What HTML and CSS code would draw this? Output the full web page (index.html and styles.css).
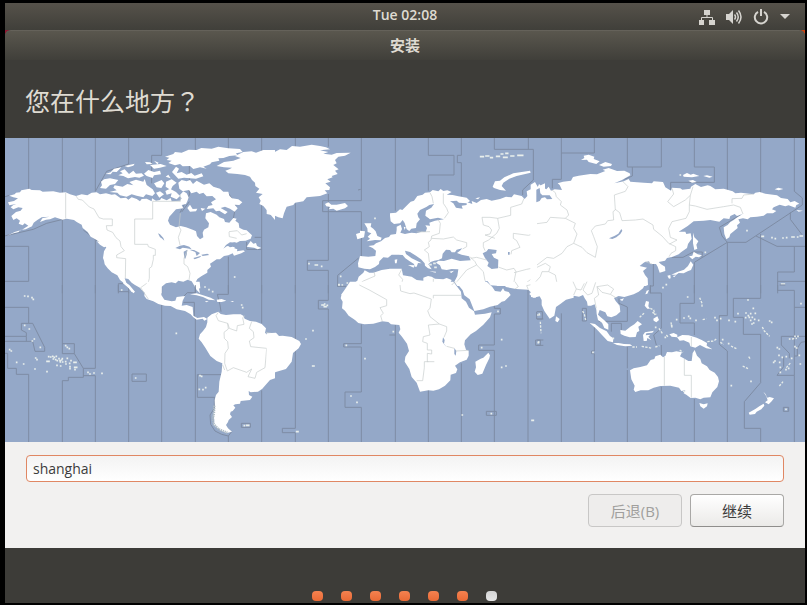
FILE: index.html
```html
<!DOCTYPE html>
<html lang="zh-CN">
<head>
    <meta charset="UTF-8">
    <meta name="viewport" content="width=device-width, initial-scale=1.0">
    <title>安装</title>
    <link rel="stylesheet" href="styles.css">
</head>
<body>
    <header class="panel">
        <time class="clock">Tue 02:08</time>
        <div class="indicators">
            <svg width="16" height="16" viewBox="0 0 16 16"><path d="M5 1h6v5H5zM0 11h5v5H0zM10 11h6v5h-6z"/><path class="thin" d="M8 6v2.500M2.500 11V8.500h11V11"/></svg>
            <svg width="16" height="16" viewBox="0 0 16 16"><path d="M0 5h3l4-4v14l-4-4H0z"/><path class="arc" d="M8.500 5.500q2 2.500 0 5M10.500 3.500q3.500 4.500 0 9M12.500 1.500q5 6.500 0 13"/></svg>
            <svg width="16" height="16" viewBox="0 0 16 16"><path class="ring" d="M5 2.800a6.200 6.200 0 1 0 6 0M8 0v7"/></svg>
            <svg class="caret" width="10" height="5" viewBox="0 0 10 5"><path d="M0 0h10L5 5z"/></svg>
        </div>
    </header>

    <div class="desktop">
        <main class="window">
            <div class="titlebar">安装</div>
            <h1>您在什么地方？</h1>

            <svg class="map" viewBox="0 0 2400 912" role="img" aria-label="世界时区地图">
                <!-- North America -->
                <g transform="translate(-15 -24)">
                    <path class="zone" d="M86 24V180M187 24V190M286 24V184M386 24V102L320 124L286 184M485 24V76H455V160M568 60V195M586 24V60M685 24V60M785 24V66M0 205L28 196M0 321L100 298L140 280L197 266M15 349H86V454H15M187 266V490M286 325V490M250 300L286 328L312 350M355 490V461H378M386 470V490M485 470V490M586 465V490M685 380V490M785 220V490M700 266L708 222L685 190M545 246L568 215M740 336V358H785M764 322H785M568 195L540 248"/>
                    <path class="land" d="M28 197L44 193L48 188L60 187L64 181L88 176L95 180L120 181L128 185L160 184L180 188L197 187L210 193L228 198L245 193L262 196L275 188L290 187L300 193L318 190L335 194L345 193L362 205L378 203L385 209L395 202L410 207L420 214L425 207L440 206L455 214L456 205L468 212L480 210L484 204L500 211L512 204L515 214L540 212L545 205L538 197L550 184L560 190L566 202L562 214L558 222L545 225L550 235L528 238L518 249L508 260L504 272L510 284L528 292L542 288L558 292L580 300L588 304L591 318L600 328L610 322L608 308L612 299L625 292L627 280L616 265L618 250L632 246L650 254L658 262L672 267L675 276L688 278L700 264L710 266L706 272L716 280L718 293L730 299L740 301L756 316L752 326L737 332L720 333L710 338L690 337L678 345L670 356L680 349L697 346L707 347L703 355L712 358L711 364L730 361L735 364L724 370L702 377L698 370L685 376L672 378L660 388L650 388L638 396L630 401L633 410L622 420L622 428L605 438L592 447L587 457L596 472L600 490L590 480L580 462L575 454L563 449L550 455L535 452L527 460L515 457L498 460L485 470V490H436L430 479L405 465L395 458L385 447L374 445L379 458L390 470L402 485L395 486L380 466L360 450L352 436L335 427L323 415L314 403L312 392L309 384L312 364L319 352L308 344L290 330L272 320L263 306L248 294L245 284L230 276L222 270L200 266L188 269L165 262L150 268L138 269L120 276L127 265L148 260L125 262L112 270L101 278L96 289L77 298L60 300L56 306L40 310L20 318L44 306L66 299L85 287L74 280L68 286L56 281L60 272L50 265L40 270L34 258L48 246L62 242L68 234L55 232L40 238L32 232L40 225L48 222L28 226L24 217L42 213L54 205L40 202Z"/>
                    <!-- arctic islands -->
                    <path class="land" d="M495 80L520 72L525 66L545 68L566 59L590 60L604 54L635 56L655 50L685 55L720 57L728 66L708 70L712 76L688 78L670 84L655 85L658 92L635 97L630 103L610 110L620 116L600 112L580 117L570 108L548 109L540 102L525 106L505 99L515 92L500 90L508 83ZM516 126L528 110L537 116L530 130L545 126L560 134L574 129L584 137L605 130L610 139L588 146L552 143L535 146ZM535 158L545 150L560 154L570 150L579 162L590 152L612 164L628 160L640 170L660 176L670 185L685 185L688 197L696 205L715 208L727 217L718 225L704 224L713 235L704 245L690 236L675 230L662 234L683 246L675 253L658 242L648 244L640 235L620 237L625 228L638 225L633 217L648 208L637 198L620 199L610 188L598 192L590 185L574 190L567 180L548 184L538 176ZM344 166L368 170L382 162L400 166L388 156L408 149L430 155L434 147L440 165L458 178L465 190L457 198L438 193L430 202L410 197L395 193L380 200L360 196L352 188L328 186L350 181L340 173ZM303 155L312 148L330 145L355 150L345 162L330 165L318 176L300 174L306 166ZM316 132L332 127L342 116L364 112L350 126L338 125L332 133ZM355 136L368 130L360 124L374 118L387 132L400 122L408 131L425 130L432 137L418 143L405 141L384 145L370 138ZM374 108L404 101L400 107L384 112ZM435 96L450 97L458 102L440 103ZM462 92L476 98L472 103ZM450 105L482 102L500 108L480 113L462 116ZM432 131L445 120L462 126L480 122L483 133L462 136L458 144L440 138ZM498 155L515 148L530 158L518 168L512 180L497 170ZM462 160L485 150L493 160L484 174L470 172ZM468 188L480 184L492 193L478 203ZM496 183L510 176L528 186L540 198L530 208L512 200L515 190L500 194ZM497 140L505 134L512 145ZM562 234L570 224L578 237L592 236L588 244L570 245ZM602 234L616 236L606 243Z"/>
                    <path class="land" d="M650 108L672 96L700 92L722 84L705 78L730 66L755 64L768 68L790 60H825V270L810 252L800 240L790 228L778 222L782 212L776 202L788 192L768 188L778 176L766 168L765 158L756 150L750 140L735 135L712 132L685 130L676 122L688 118L696 113L672 112ZM740 350L752 333L760 341L768 339L771 348L784 354L773 358L762 353ZM290 334L303 336L318 350L312 352L300 344Z"/>
                    <path class="sea" d="M474 310L480 313L490 324L493 332L484 324L480 322ZM526 354L540 347L552 345L568 350L575 358L560 355L548 353L540 358ZM553 385L551 365L562 359L560 374L556 386ZM568 359L582 360L600 369L590 378L586 366ZM580 384L604 377L600 382L584 388ZM604 374L622 371L628 375L608 378ZM680 345L703 337L722 343L712 354L698 350L690 352ZM592 214L600 208L614 222L600 234Z"/>
                    <path class="border" d="M197 188V266M228 198L235 208L247 210L268 231L282 237L297 263L310 267H337V287H319L321 300L338 307L348 323L360 333L363 350L373 362L350 375V383L377 386L376 445M541 195V214H458V267H404V343H443L445 350L466 358V376H460V388L455 410L448 415V445L440 475M541 250L537 290L543 300L535 322L540 345M562 360L552 385V402L563 410L570 430L567 450M687 305L712 302L725 315L740 311M687 306L688 320L710 325"/>
                    <path class="speck" d="M704 441h0"/>
                </g>

                <!-- Europe and western Asia -->
                <g transform="translate(795 -24)">
                    <path class="zone" d="M76 24V50M175 24V50M76 220V490M274 24V212H158V245H274V378M376 24V242M475 24V76H552V135H475V182M574 24V76H562V98H574V200M673 24V58H790V150L758 180V195M775 24V58M175 192V391H112V421H175V490M266 384L203 436V470M264 180L272 178M172 120L185 110L196 96M475 240V265"/>
                    <path class="land" d="M-10 60L10 68L30 58L50 60L66 48L90 50L125 44L150 48L168 52L180 58L150 61L175 66L160 71L185 74L200 69L242 68L225 77L205 80L195 90L200 100L190 105L206 118L195 122L203 132L185 138L188 142L172 148L182 155L166 160L180 172L178 180L164 181L172 190L150 198L110 202L100 214L75 218L70 225L50 230L45 242L42 250L38 265L25 262L15 257L-10 252ZM165 222L175 217L184 224L200 224L225 219L234 228L225 235L200 242L190 236L176 238L181 231L169 229ZM668 170L675 154L690 152L703 142L730 130L780 122L782 128L740 138L718 146L700 158L695 168L708 182L690 180L672 174Z"/>
                    <path class="land" d="M360 258V250L378 248L390 238L397 240L415 222L422 215L432 212L442 198L458 194L465 188L480 187L488 180L505 184L512 177L520 183L532 181L545 186L530 194L548 195L565 199L590 203L600 213L590 220L567 218L560 212L540 214L550 220L558 233L578 236L575 227L590 225L590 216L607 222L605 213L620 219L633 210L650 207L665 212L690 207L708 200L725 202L732 193L755 198L764 207L772 198L770 184L782 178L782 164L795 156L803 170L825 160V468H562L553 455L562 438L565 418L545 417L530 420L515 418L510 406L498 398L505 392L522 393L545 386L570 393L602 391L597 379L575 374L561 369L570 362L577 355L560 359L555 367L545 367L540 360L528 359L518 371L516 385L505 390L493 392L482 396L475 403L485 418L474 415L465 407L464 400L453 388L438 377L420 366L405 362L408 372L425 385L442 393L455 400L444 399L440 410L434 410L432 402L418 393L406 385L398 375L385 374L365 374L354 383L340 382L328 394L327 402L315 411L300 418L283 416L265 412L264 400L270 378L295 380L316 378L318 362L308 354L295 348L311 346L318 340L333 334L345 324L357 321L362 314L378 312L380 300V290L392 284L396 297L391 308L405 312L415 310L425 308L440 310L455 305L467 306L471 294L466 286L480 287L478 278L495 272L522 268L504 263L480 268L466 257L468 242L484 233L492 222L478 225L469 231L450 240L442 251L445 262L450 268L440 280L438 294L424 296L418 303L410 298L404 279L398 270L390 280L372 282L362 274Z"/>
                    <path class="land" d="M213 495L240 470L248 462L262 452L266 440L280 428L284 421L298 428L310 428L335 420L360 416L395 416L399 436L412 438L425 440L440 450L460 452V443L474 438L485 440L495 446L520 448L530 444L545 450L540 460L568 495ZM283 280L304 280L302 290L310 296L317 304L322 318L335 323L332 331L315 330L290 334L300 326L293 320L304 310L293 306L292 295ZM258 312L270 308V302L285 304L282 322L262 328ZM414 405L433 406L431 413ZM374 389L382 388L380 400L375 400ZM478 424L498 425L497 428ZM538 425L552 422L544 429ZM401 290L407 292L404 300ZM616 205L630 202L624 208Z"/>
                    <path class="sea" d="M638 370L650 364L655 357L680 360L678 370L665 372L672 383L685 389L684 415L665 417L652 408L656 398L645 384ZM645 452L653 454L662 466L680 467L690 472L700 469L709 470L703 480L672 482L660 474L650 468ZM714 366h5v8h-5z"/>
                    <path class="border" d="M480 188L486 200L490 220M520 190V220L530 235L535 248L523 265M504 268L511 280L508 310L485 318L483 330L475 337L478 350L463 360L475 370L478 396M440 306L480 305M485 325L520 327L550 321L560 330L590 338V350L578 357M762 205L755 222L722 232V256L683 265L688 295L680 310L656 330L640 338V350L645 362M683 265L660 262L636 262L640 285L657 290L665 300L660 312L645 315L675 325M830 300L797 310L775 316L730 310L730 325L740 332L750 352L725 362L723 373M602 385L620 382L650 390M600 380L615 395L620 405L590 420L565 450L555 462M620 405L640 425L645 452M685 411L710 420L732 415L738 425L732 455L742 475M732 428L770 418L800 412M820 384L790 388L810 400M312 425L315 438L280 453L268 462L270 482M395 418L386 435L398 448L390 485M490 446V470M745 475L780 450L800 430M820 450L790 472"/>
                    <path class="speck" d="M117 401h0M136 405h6M155 409h0M212 439h0M207 464h0M217 465h0M232 459h0M315 265h0M632 80h8M648 78h8M662 83h5M680 79h8M694 72h4M708 70h5M701 82h10M723 78h8M744 76h14M480 404h3M492 400h3M495 412h3"/>
                </g>

                <!-- Northern Asia -->
                <g transform="translate(1596 -24)">
                    <path class="zone" d="M73 24V148H46V175M172 24V69H73M271 24V111H373V24M286 111V138L262 148M472 24V111H532V157H401V180M571 24V180M671 24V190M772 24V184L796 204V225L627 337H571L555 318L547 292L612 254M760 247V268L795 314M657 318L720 349H804M571 337L472 397V490M495 383L496 366H468L438 382H405M571 337V490M671 312V490M772 349V426H722V490M722 454H804M349 400V468H340V490"/>
                    <path class="land" d="M-20 185L0 178L6 162L16 172L28 178L35 170L42 182L53 178L75 180L68 165L62 160L78 155L102 152L108 141L125 137L160 132L180 133L205 123L197 119L215 114L240 123L262 122L278 130L280 136L255 150L232 160L260 154L275 147L280 155L320 158L345 160L350 154L378 156L385 172L402 182L405 173L430 175L436 179L460 176L462 170L475 162L492 171L512 166L520 168L535 178L560 176L587 184L595 190L612 188L650 193L655 188L668 186L685 191L720 196L732 204L752 207L760 217L773 213L787 221L778 225L775 233L755 226L745 229L728 224L710 232L705 238L718 243L708 250L690 250L680 257L660 260L640 262L632 268L618 265L604 268L609 278L600 286L602 294L592 302L580 312L577 322L568 328L562 312L560 292L572 285L580 276L590 270L599 263L617 252L600 258L593 252L580 258L577 267L560 265L547 275L520 270L500 272L470 274L452 288L425 305L445 305L448 312L461 310L464 326L453 342L450 354L432 367L425 373L407 380L390 384L384 392L365 396L372 403L384 410L385 423L368 428L362 410L357 402L340 402L336 394L322 397L308 408L330 413L318 423L324 435L332 445L333 465L326 468H-20Z"/>
                    <path class="land" d="M468 308L472 322L484 334L478 344L481 356L472 360L468 340ZM456 379L466 377L470 365L482 373L495 376L486 382L476 380L466 388ZM461 394L469 404L462 420L452 424L440 430L425 429L418 434L403 434L421 426L441 419L453 408ZM391 437L400 435L401 445L396 446ZM408 438L418 436L411 442ZM132 90L142 84L140 77L155 74L172 80L170 87L188 94L178 102L155 96L150 89ZM186 105L205 96L225 102L222 108L200 110ZM438 135L450 129L461 134L469 131L487 138L465 142L440 140ZM499 138L510 136L527 140L517 143ZM454 152L468 150L479 156L465 158ZM713 178L724 173L739 177L725 181ZM778 240L798 242L785 245Z"/>
                    <path class="sea" d="M216 325L232 318L244 311L253 297L256 302L250 312L238 322L226 327ZM-2 179L8 174L10 190L16 196L38 196L46 207L30 208L24 202L14 204L8 213L-2 217Z"/>
                    <path class="border" d="M45 180L55 188L58 200L73 215L70 225L90 240L95 255L85 265L40 262L30 277L0 281M85 265L115 280L110 295L120 312L110 340M110 340L90 350L75 370L50 385L30 382L0 405M110 340L135 352L150 368L175 382L181 350L170 320L163 302L175 288L205 282L212 272L230 270L228 245L235 240L232 195L265 184L273 170L255 152M235 238L248 248L255 272L295 270L318 267L348 285L350 298L375 318L395 340L416 350V362L402 370L396 380M405 175L410 192L392 215L410 230L445 210L460 196L468 170M460 196L457 225L475 228L510 238L560 230L590 225L610 232L618 252M457 225V245L447 265L405 275L395 295L400 322L420 330L398 342M650 192L620 195L615 205L585 206V220M0 412L25 400L40 410L35 425L15 425L10 440L-10 462M35 425L55 435L60 460L90 466L118 464L125 480M118 464L145 475L152 458L175 462L182 478M345 402L325 395"/>
                    <path class="speck" d="M675 319h4M705 323h0M715 326h0M738 324h0M749 323h0M765 321h6M782 321h0M790 318h6M734 462h8M388 464h0M378 473h0M505 367h0M630 302h0M430 135h0"/>
                </g>

                <!-- Pacific and South America -->
                <g transform="translate(-15 441)">
                    <path class="zone" d="M15 67H86V115H98L134 187V199H105L98 169H15M64 115H86M64 115V135L79 143V154H15M79 154V169M15 205H23V250H49V268H86V471M187 0V206H223V176H187M223 206L250 250V277H205V287H187V471M286 0V250H250M250 272H286V471M355 0V20H386V471M396 267H439V289H396ZM485 60V471M586 0V23H562L535 50M550 52H583V100M586 100V471M685 0V28H652L660 60L663 80M665 269H592V337H645M643 340V370L630 390L632 418L645 438L665 448L685 453V471M685 453L695 440M785 0V115M785 316V471M724 415H751V427H724Z"/>
                    <path class="land" d="M420 -10H485L484 30L493 44L515 49L526 47L530 36L555 33L548 47L545 62L560 60L578 66L580 92L592 99L612 96L622 102L613 107L608 101L590 104L580 97L572 88L555 78L530 73L512 63L495 62L475 57L460 49L440 42L433 33L434 23L422 12ZM373 -10L388 0L405 20L400 25L385 8L368 -6ZM584 -10H599L601 10L594 11L587 1ZM570 28L590 25L609 31L632 38L646 46L626 44L609 36L590 31ZM650 44L665 42L679 47L665 51L652 51ZM614 48L626 49L620 52ZM691 48L702 48L698 51Z"/>
                    <path class="land" d="M622 98L635 88L655 80L662 87L678 90L700 88L722 88L730 92L734 101L750 108L768 110L785 117L798 130L795 143L802 150L825 145V280L810 285L800 296L787 311L774 320L752 322L746 318L747 330L757 335L750 345L722 348L720 356L706 358L700 361L706 368L698 378L692 380L690 388L696 396L686 405L684 411L678 420L684 430L696 440L680 444L663 437L650 427L640 420L643 405L640 388L645 370L644 345L648 330L656 320L658 290L665 260L667 235L650 228L631 213L616 188L605 172L596 161L600 148L609 138L618 126L622 112Z"/>
                    <path class="fjord" d="M643 362L642 385L638 402L642 418L655 432L682 443"/>
                    <path class="border" d="M445 42L430 20L422 8L440 -5M655 82L648 92L655 107L683 115L688 130L710 138L712 122L732 118L728 98L735 92M683 115L685 132L672 142L673 160L683 170L685 190L675 205L674 235L682 258L700 248L740 262L755 252L744 275L765 280L770 262L795 248L800 190L752 185L748 168L762 158L760 140L748 130L755 110M798 142L815 145M668 240L674 255"/>
                    <path class="speck" d="M74 33h0M84 34h0M96 38h0M100 43h0M365 15h0M74 121h0M88 132h0M103 162h0M97 168h0M121 187h0M29 194h0M34 198h0M197 182h0M202 187h0M208 191h0M50 232h0M71 237h0M107 219h0M111 224h0M105 252h0M141 229h6M141 260h0M146 215h0M152 216h0M158 214h0M163 217h0M169 214h0M160 222h0M167 224h0M172 227h0M177 221h0M180 227h0M185 225h0M187 221h0M181 231h0M188 231h0M171 241h0M182 243h0M197 230h0M202 220h0M198 237h0M209 235h0M213 227h0M222 232h6M210 245h0M210 251h0M224 247h6M225 254h0M264 262h0M270 267h0M282 264h0M306 265h0M407 279h0M529 145h0M600 272h0M605 274h0M598 313h0M609 314h0M617 308h0M733 422h0M740 421h6M615 6h0M627 14h0M638 20h0M725 60h0M728 68h0"/>
                </g>

                <!-- Africa and the Atlantic -->
                <g transform="translate(795 441)">
                    <path class="zone" d="M76 0V430H37V443H76V471M175 0V46H145V72H175V471M203 0V4H228M274 118V176H221V186H274V321H225V367H274V471M376 120V150H358M376 150V471M475 315V471M574 235V471M673 60V70H691V87H673V180H626V196H673V471M649 379H679V391H649ZM774 15V471M800 80V102H820M820 165H797V181H820"/>
                    <path class="land" d="M240 -10L225 13L215 27L212 40L218 50L216 70L225 77L236 92L255 105L265 114L283 118L310 116L337 109L355 111L363 118L388 120L391 133L386 143L396 155L411 176L417 198L406 215L404 230L418 252L425 276L440 293L447 312L450 320L475 316L490 317L507 313L525 302L541 286L542 269L558 264L562 253L555 242L570 232L590 224L596 212V197L588 194L583 178L585 166L602 148L618 138L640 119L660 97L665 82L645 86L615 89L612 79L597 68L588 50L575 40L573 20L550 -10Z"/>
                    <path class="land" d="M557 -10L578 16L583 31L599 43L613 78L640 73L660 65L683 60L695 50L704 48L722 30L716 21L704 18L699 10L692 20L675 18L667 6L650 -10ZM693 -10L708 6L738 12L775 14L783 22L778 27L790 38L825 30V-10ZM616 230L632 221L640 218L655 203L660 211L658 220L648 240L637 266L623 270L614 260L618 247ZM-10 145L18 143L27 153L38 152L65 156L88 168L93 177L86 190L69 204L65 230L55 243L48 252L20 260L0 268L-10 285Z"/>
                    <path class="sea" d="M519 157L524 165L522 176L530 186L524 180L517 170ZM553 189L559 198L557 212L553 207Z"/>
                    <path class="border" d="M268 0L298 15L350 44V62L330 68L340 85L332 92L337 110M390 0L392 18L420 26L432 24L484 42L480 70L473 77L480 95L508 117M545 0L555 -10M490 40V31H573M508 117L475 120L480 150L460 155L458 170L472 175V195H485V207L472 205V230L493 230M475 230H463V248L458 287H440M508 117L530 125V138L522 157M530 184L553 190M557 198L595 196M735 -10L745 5L735 12M800 -5L770 2L775 14"/>
                    <path class="speck" d="M207 0h0M156 60h5M163 65h5M172 61h0M164 57h0M129 137h0M108 162h0M128 243h4M229 181h0M285 221h0M370 140h0M243 333h0M261 352h0M577 390h0M664 386h0M684 79h0M635 188h0M695 164h0M708 243h0M695 247h0M786 406h4M80 440h4M805 173h0M804 90h0"/>
                </g>

                <!-- South-east Asia and Oceania -->
                <g transform="translate(1596 441)">
                    <path class="zone" d="M340 0V24H373V130L350 150L358 180M73 85V471M136 70H148V108H136ZM172 120V198H164V206H172V471M246 40V55L271 66V109H185M223 140V115H253V136M271 185V250M271 255V471M373 180V212M373 305V471M472 0V55H429V114H472V150M472 342V471M571 0V92H547V178L571 198V471M671 0V40H589V97H619V148H671V293L622 350V430H671V471M722 0V16H772V271H720L740 245V215M772 67H804M804 154H733V180L757 205V220M804 170L792 172L781 190V213H772M772 271V471M739 367H755V379H739ZM0 80H16V102H0M0 165H10V181H0M728 0H745"/>
                    <path class="land" d="M-20 -10L-18 36L-5 38L6 30L14 45V60L22 78L38 101L52 92L57 66L70 57L87 44L110 38V32L126 35L138 30L143 40L150 50L152 62L162 62L173 58L178 74L179 87L183 105L195 113L202 129L214 134V118L202 106L193 98L183 89L188 75L205 82L211 94L223 97L238 91L250 80L248 62L236 48L231 39L245 33L262 36L290 28L305 20L318 10L328 -10ZM248 44L261 40L256 48ZM325 28L329 17L336 15L331 26ZM57 94L68 102L62 112L55 108Z"/>
                    <path class="land" d="M158 114L174 117L189 129L209 139L219 153L229 160L228 172L212 168L195 150L184 138L176 130ZM228 174L245 174L261 177L279 178L286 182L265 184L240 180ZM250 135L265 137L280 125L292 118L302 108L315 118L304 125L307 138L300 142L296 156L278 157L262 152L251 147ZM318 150L324 142L351 137L346 143L328 145L326 151L340 149L334 155L343 166L331 159L329 168H320ZM327 48L336 50L334 64L339 71L331 71L323 62ZM349 101L361 94L366 105L358 112L350 107ZM397 148L410 144L421 149L421 157L436 150L455 151L479 158L494 165L510 174L509 182L526 193L508 190L489 180L475 188L460 184L457 173L440 166L428 167L420 157L404 155Z"/>
                    <path class="land" d="M279 256L290 250L310 246L330 241L341 225L352 222L355 214L370 209L378 217L385 213L390 201L405 202L418 199L435 202L429 214L445 223L454 228L464 228L467 204L473 195L480 212L490 222L494 235L510 244L518 255L533 263L543 276L546 289L541 306L526 322L520 337L500 338L490 343L475 338L461 339L448 329L440 325L445 316L433 318L426 308L400 302L370 303L350 308L334 316L311 316L295 321L290 314L293 302L283 283ZM487 354L500 358L512 355L510 364L500 371L490 364ZM679 320L685 326L691 338L698 336L711 340L704 349L695 358L684 352L692 346L688 334ZM680 356L682 362L673 373L659 380L654 387L638 389L635 383L655 372L667 364Z"/>
                    <path class="border" d="M382 216V302M442 222V271H463V338M463 156V184M108 -10L118 12L110 30M118 12L132 15L142 -5M150 -10L138 15L152 30L165 25L176 -8M178 70L172 40L185 30L180 5L212 0L230 12L220 28L240 40M180 5L195 22L220 28"/>
                    <path class="chain" d="M137 78L142 88L146 105M6 85L10 95M10 110L12 145M286 186H300M314 184L335 188L345 190M355 186L367 182M340 70L350 75L354 90M346 82L358 88M308 97L322 84M402 112L405 128M366 130L378 148M388 150L395 158M428 195L438 202M488 38L495 55V70M497 104L508 101M511 170L530 168L540 160M550 172L560 178M582 183L600 192M617 243L633 251M676 126L682 138L698 154M748 248L762 232M727 303L738 290M765 162L780 160M635 215L640 222M438 320L446 318"/>
                    <path class="speck" d="M5 171h0M168 202h0M229 160h0M419 104h0M452 36h0M441 99h0M455 94h0M460 100h0M477 106h0M534 98h0M540 106h0M551 101h0M576 106h0M595 110h0M603 86h0M633 45h0M649 70h0M627 84h0M634 92h0M626 98h0M637 97h0M641 86h0M655 85h0M646 97h0M653 103h0M641 106h0M650 114h0M645 117h0M665 106h0M698 108h0M704 112h0M792 56h0M758 162h0M774 154h0M783 154h0M774 185h0M779 189h0M721 188h0M727 192h0M726 211h0M736 217h0M710 232h0M714 228h0M728 232h0M748 215h0M764 220h0M787 211h0M790 237h0M730 247h0M747 254h0M755 250h0M730 262h0M557 164h0M575 176h0M642 289h0M583 302h0M747 373h0M385 157h0M404 122h0M356 127h0"/>
                </g>
            </svg>

            <form class="location">
                <input type="text" id="city" value="shanghai" aria-label="城市">
                <div class="buttons">
                    <button type="button" disabled>后退(B)</button>
                    <button type="button">继续</button>
                </div>
            </form>

            <div class="steps">
                <span class="dot"></span>
                <span class="dot"></span>
                <span class="dot"></span>
                <span class="dot"></span>
                <span class="dot"></span>
                <span class="dot"></span>
                <span class="dot current"></span>
            </div>
        </main>
    </div>
</body>
</html>
```
FILE: styles.css
```css
* {
    box-sizing: border-box;
}

body {
    font-family: "Open Sans", "Noto Sans CJK SC", sans-serif;
    font-size: 15px;
    margin: 0;
    padding: 3px 2px 2px 5px;
    min-height: 100vh;
    background-color: #000;
    color: #dfdbd2;
    display: flex;
    flex-direction: column;
}

/* Top panel */
.panel {
    display: grid;
    grid-template-columns: 1fr auto 1fr;
    align-items: center;
    height: 27px;
    padding: 0 15px;
    background: linear-gradient(#56524a, #403f3a);
}

.clock {
    grid-column: 2;
    font-size: 14px;
    font-weight: 600;
    line-height: 24px;
    padding-bottom: 3px;
}

.indicators {
    display: flex;
    align-items: center;
    justify-content: flex-end;
    gap: 11px;
}

.indicators svg {
    fill: #d6d4cf;
}

.indicators .thin,
.indicators .arc,
.indicators .ring {
    fill: none;
    stroke: #d6d4cf;
}

.indicators .arc {
    stroke-width: 1.5;
}

.indicators .ring {
    stroke-width: 2;
}

/* Installer window */
.desktop {
    flex: 1;
    display: flex;
    background: linear-gradient(90deg, #8c1932, #cc4413);
}

.window {
    flex: 1;
    display: flex;
    flex-direction: column;
    background-color: #3d3c38;
    border-radius: 6px 6px 0 0;
}

.titlebar {
    height: 30px;
    line-height: 28px;
    border-top: 1px solid #65625a;
    border-radius: 6px 6px 0 0;
    background: linear-gradient(#5a574e, #403f3a);
    font-weight: bold;
    text-align: center;
}

/* the Japanese face keeps the question mark centred in its cell */
h1 {
    margin: 0;
    padding: 22px 20px 20px;
    font-family: "Noto Sans CJK JP", sans-serif;
    font-feature-settings: "locl" 0;
    font-size: 25px;
    font-weight: normal;
    line-height: 36px;
}

.map {
    display: block;
    width: 100%;
    background-color: #94a8c8;
}

.land {
    fill: #fff;
}

.sea {
    fill: #94a8c8;
}

.zone,
.border,
.chain,
.fjord,
.speck {
    fill: none;
}

.zone {
    stroke: #7e8ca4;
    stroke-width: 3;
}

.border {
    stroke: #c5cccb;
    stroke-width: 2;
}

.chain {
    stroke: #e6ece9;
    stroke-width: 4;
    stroke-dasharray: 7 4;
}

.fjord {
    stroke: #aebbc4;
    stroke-width: 7;
    stroke-dasharray: 4 2;
}

.speck {
    stroke: #e9efec;
    stroke-width: 5;
    stroke-linecap: square;
}

/* City entry */
.location {
    display: flex;
    flex-direction: column;
    gap: 12px;
    padding: 13px 21px 21px;
    background-color: #f2f1f0;
}

.location input {
    width: 100%;
    height: 27px;
    padding: 0 6px;
    border: 1px solid #e08763;
    border-radius: 4px;
    outline: none;
    background: linear-gradient(#f3f3f3, #fff);
    color: #3c3c3c;
    font: inherit;
    font-size: 14px;
}

.buttons {
    display: flex;
    justify-content: flex-end;
    gap: 8px;
}

button {
    width: 94px;
    height: 33px;
    padding: 0;
    border: 1px solid #a9a8a6;
    border-bottom-color: #8f8e8c;
    border-radius: 4px;
    background: linear-gradient(#fff, #ebeae8);
    color: #3c3c3c;
    font: inherit;
}

button:disabled {
    border-color: #c8c7c6;
    background: #eeedec;
    color: #a09f9d;
}

/* Progress dots */
.steps {
    flex: 1;
    display: flex;
    align-items: flex-end;
    justify-content: center;
    gap: 18px;
    min-height: 55px;
    padding: 0 2px 2px 0;
}

.dot {
    width: 11px;
    height: 10px;
    border-radius: 4px;
    background: linear-gradient(#f58250, #ea6a35);
}

.dot.current {
    background: linear-gradient(#d3d3d3, #e6e6e6);
}
```
